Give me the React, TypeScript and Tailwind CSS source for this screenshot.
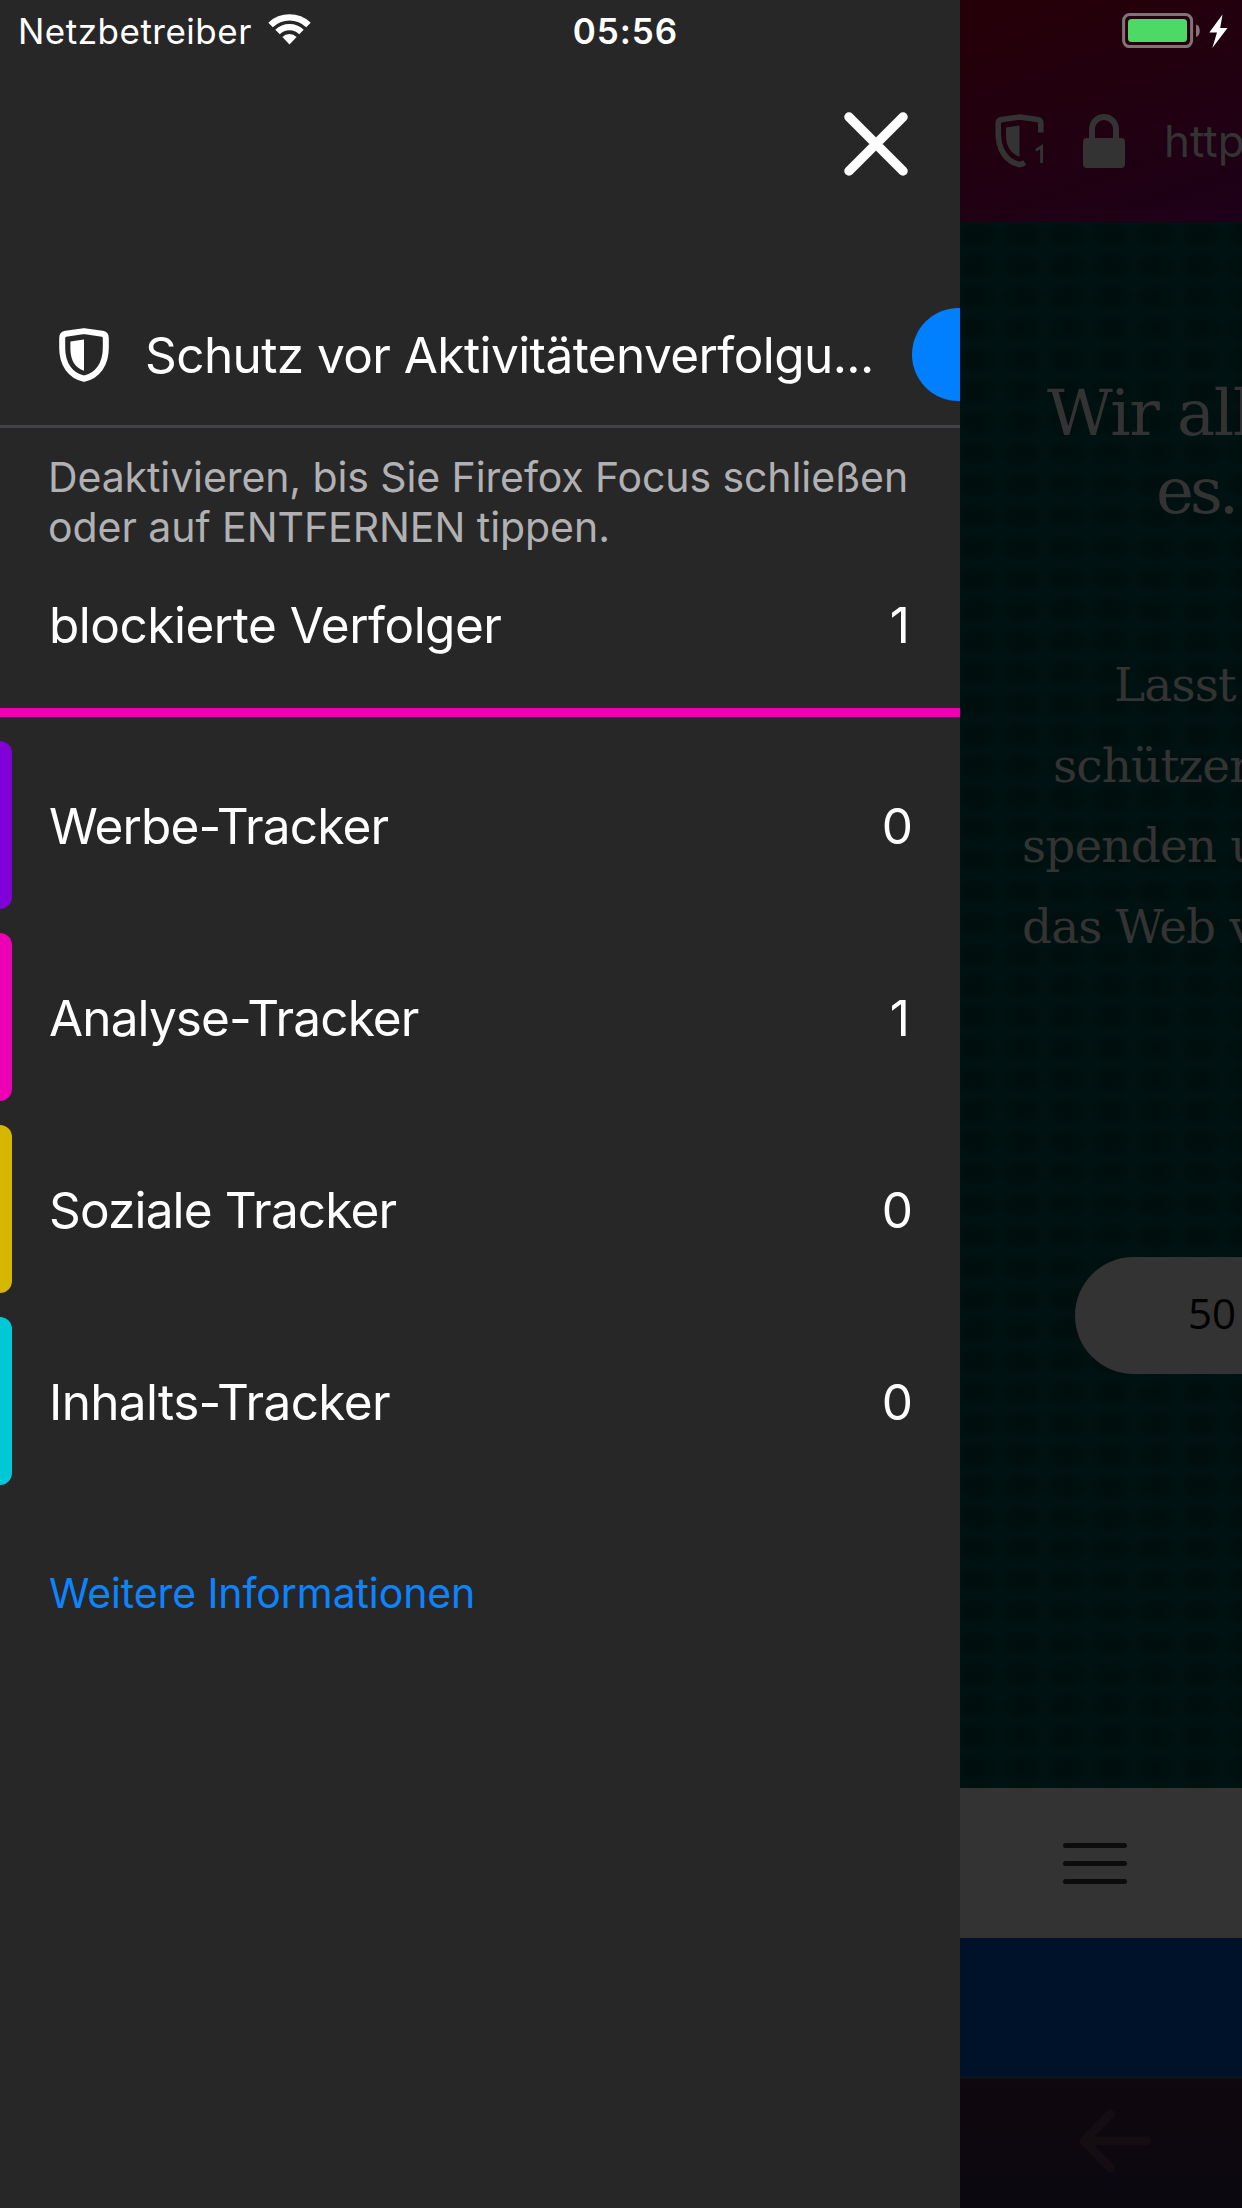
import type { ReactNode } from "react";

const trackers = [
  { label: "Werbe-Tracker", count: 0, bar: "bg-[#8000d7]", tracking: "tracking-[-0.85px]" },
  { label: "Analyse-Tracker", count: 1, bar: "bg-[#ed00b5]", tracking: "tracking-[-0.88px]" },
  { label: "Soziale Tracker", count: 0, bar: "bg-[#d7b600]", tracking: "tracking-[-0.85px]" },
  { label: "Inhalts-Tracker", count: 0, bar: "bg-[#00c8d7]", tracking: "tracking-[-0.65px]" },
];

function WifiIcon() {
  return (
    <svg className="ml-[16px] mt-[-3px] h-[31px] w-[43px]" viewBox="0 0 43 31" fill="#fff">
      <path d="M0.3 8.7A30.5 30.5 0 0 1 42.7 8.7L38.2 13.2A24 24 0 0 0 4.8 13.2Z" />
      <path d="M7.3 15.7A20.4 20.4 0 0 1 35.7 15.7L31.2 20.2A14 14 0 0 0 11.8 20.2Z" />
      <path d="M14.4 22.9A10.2 10.2 0 0 1 28.6 22.9L21.5 30.4Z" />
    </svg>
  );
}

function CloseIcon() {
  return (
    <svg className="h-16 w-16" viewBox="0 0 64 64" stroke="#fff" strokeWidth="9.5" strokeLinecap="round">
      <path d="M5 5L59 59M59 5L5 59" />
    </svg>
  );
}

function ShieldIcon() {
  return (
    <svg className="h-[54px] w-[50px] shrink-0" viewBox="0 0 50 54">
      <path
        d="M25 3.1L43.2 5.8Q46.8 6.3 46.8 10V20C46.8 36 38.8 47.6 25 50.7C11.2 47.6 3.2 36 3.2 20V10Q3.2 6.3 6.8 5.8Z"
        fill="none"
        stroke="#fff"
        strokeWidth="6"
        strokeLinejoin="round"
      />
      <path d="M25 11.5L11.4 13.6V21C11.4 32.5 16.4 40 25 42.8Z" fill="#fff" />
    </svg>
  );
}

function ShieldCountIcon() {
  return (
    <svg className="h-[54px] w-[50px] shrink-0" viewBox="0 0 50 54">
      <path
        d="M45.8 18.5V9.5Q45.8 6 42.3 5.5L24.5 3L6.7 5.5Q3.2 6 3.2 9.5V19C3.2 35 10.5 47.5 24.5 50.6Q27 50.3 29.8 48.6"
        fill="none"
        stroke="#333"
        strokeWidth="5.6"
        strokeLinejoin="round"
      />
      <path d="M24.5 11.5L11 13.6V21C11 32.5 16 40 24.5 42.8Z" fill="#333" />
      <path d="M40.8 36.4L46.6 32.6V49" fill="none" stroke="#333" strokeWidth="2.9" />
    </svg>
  );
}

function LockIcon() {
  return (
    <svg className="h-[54px] w-[42px] shrink-0" viewBox="0 0 42 54">
      <rect x="0" y="24" width="42" height="30" rx="4" fill="#333" />
      <path d="M9 25V15A12 12 0 0 1 33 15V25" fill="none" stroke="#333" strokeWidth="6" />
    </svg>
  );
}

function BatteryIcon() {
  return (
    <svg className="h-[35px] w-[106px]" viewBox="0 0 106 35">
      <rect x="1.6" y="1.6" width="68" height="32" rx="6" fill="none" stroke="#85717a" strokeWidth="3" />
      <rect x="6" y="6" width="59" height="23" rx="3.5" fill="#4cd964" />
      <path d="M74 11.5C79 12 79 23.5 74 24Z" fill="#85717a" />
      <path d="M100.5 1.5L87.3 19.5H95L90.3 35L105.5 15H98.2Z" fill="#fff" />
    </svg>
  );
}

function Line({ className, children }: { className: string; children: ReactNode }) {
  return <span className={`block whitespace-pre ${className}`}>{children}</span>;
}

function Panel() {
  return (
    <aside className="flex h-full w-[960px] shrink-0 flex-col overflow-hidden bg-[#272727]">
      <div className="flex h-[60px] items-center pl-[18px] pt-px text-[35px] leading-[42px]">
        <span className="tracking-[0.5px]">Netzbetreiber</span>
        <WifiIcon />
        <span className="ml-[262px] font-semibold tracking-[0.9px]">05:56</span>
      </div>
      <div className="flex h-[224px] justify-end pr-[52px] pt-[52px]">
        <CloseIcon />
      </div>
      <div className="flex h-[144px] shrink-0 items-center border-b-[3px] border-[#424247] pl-[59px]">
        <ShieldIcon />
        <span className="ml-9 w-[767px] shrink-0 text-[49.5px] leading-[60px] tracking-[-0.58px] whitespace-nowrap">
          Schutz vor Aktivitätenverfolgu...
        </span>
        <span className="h-[93px] w-[153px] shrink-0 rounded-full bg-[#0080ff]" />
      </div>
      <p className="pl-12 pt-6 text-[41px] leading-[50px] text-[#b1b1b3]">
        <Line className="tracking-[-0.1px]">Deaktivieren, bis Sie Firefox Focus schließen</Line>
        <Line className="tracking-[-0.05px]">oder auf ENTFERNEN tippen.</Line>
      </p>
      <div className="flex h-[165px] items-center justify-between border-b-[9px] border-[#ed00b5] pb-[10px] pl-[49px] pr-[50px] text-[49.5px] leading-[60px]">
        <span className="tracking-[-0.5px]">blockierte Verfolger</span>
        <span>1</span>
      </div>
      <ul className="flex flex-col gap-6 pt-6">
        {trackers.map((t) => (
          <li key={t.label} className="flex h-[168px] items-center text-[49.5px] leading-[60px]">
            <span className={`h-full w-3 rounded-r-[12px] ${t.bar}`} />
            <span className={`ml-[37px] grow pt-0.5 ${t.tracking}`}>{t.label}</span>
            <span className={t.count === 1 ? "pr-[50px] pt-0.5" : "pr-[47px] pt-0.5"}>{t.count}</span>
          </li>
        ))}
      </ul>
      <a className="mt-[83px] pl-[49px] text-[41px] leading-[50px] tracking-[-0.1px] text-[#0a84ff]">
        Weitere Informationen
      </a>
    </aside>
  );
}

function Browser() {
  return (
    <main className="flex h-full w-[282px] shrink-0 flex-col overflow-hidden">
      <header className="h-[222px] shrink-0 bg-linear-160 from-[#260008] via-[#21000f] to-[#1d0019]">
        <div className="flex h-[60px] pl-[162px] pt-[13px]">
          <BatteryIcon />
        </div>
        <div className="flex items-center pl-[35px] pt-[51px]">
          <ShieldCountIcon />
          <span className="w-[38px] shrink-0" />
          <LockIcon />
          <span className="ml-[39px] text-[44px] leading-[60px] text-[#333]">http</span>
        </div>
      </header>
      <section className="h-[1566px] shrink-0 overflow-hidden bg-[#001312] bg-[radial-gradient(ellipse_at_center,#000f0e_0%,#00100f_45%,#001211_75%)] bg-size-[44.7px_31.3px] bg-position-[-5px_-3px] text-[#333]">
        <h1 className="pt-[152px] font-['DejaVu_Serif'] text-[64px] leading-[78px]">
          <Line className="pl-[87px] tracking-[-1.5px]">Wir all</Line>
          <Line className="pl-[196px] tracking-[-4px]">es.</Line>
        </h1>
        <p className="mt-[115px] font-['DejaVu_Serif'] text-[47px] leading-[80.7px] tracking-[-0.9px]">
          <Line className="pl-[154px]">Lasst</Line>
          <Line className="pl-[93px]">schützen</Line>
          <Line className="pl-[62px]">spenden u</Line>
          <Line className="pl-[62px]">das Web v</Line>
        </p>
        <div className="ml-[115px] mt-[289px] flex h-[117px] w-[400px] items-center rounded-full bg-[#333] pl-[113px] font-['Open_Sans'] text-[42px] leading-[60px] text-black">
          <span className="-mt-1">50</span>
        </div>
      </section>
      <div className="flex h-[150px] shrink-0 flex-col gap-[13px] bg-[#333] pl-[103px] pt-[55px]">
        <span className="h-[5px] w-16 rounded-full bg-[#0c0c0c]" />
        <span className="h-[5px] w-16 rounded-full bg-[#0c0c0c]" />
        <span className="h-[5px] w-16 rounded-full bg-[#0c0c0c]" />
      </div>
      <div className="h-[138px] shrink-0 bg-[#001229]" />
      <footer className="h-[132px] shrink-0 border-t-[3px] border-[#0d1318] bg-linear-to-b from-[#0f080e] to-[#0b080f] pl-[119px] pt-[30px]">
        <svg className="h-16 w-[72px]" viewBox="0 0 72 64" fill="none" stroke="#140d12" strokeWidth="9" strokeLinecap="round" strokeLinejoin="round">
          <path d="M31.5 5L4.8 32L31.5 59M5 32H67.5" />
        </svg>
      </footer>
    </main>
  );
}

export default function App() {
  return (
    <div className="flex h-[2208px] w-[1242px] overflow-hidden bg-[#272727] font-['Inter',sans-serif] text-white">
      <Panel />
      <Browser />
    </div>
  );
}
